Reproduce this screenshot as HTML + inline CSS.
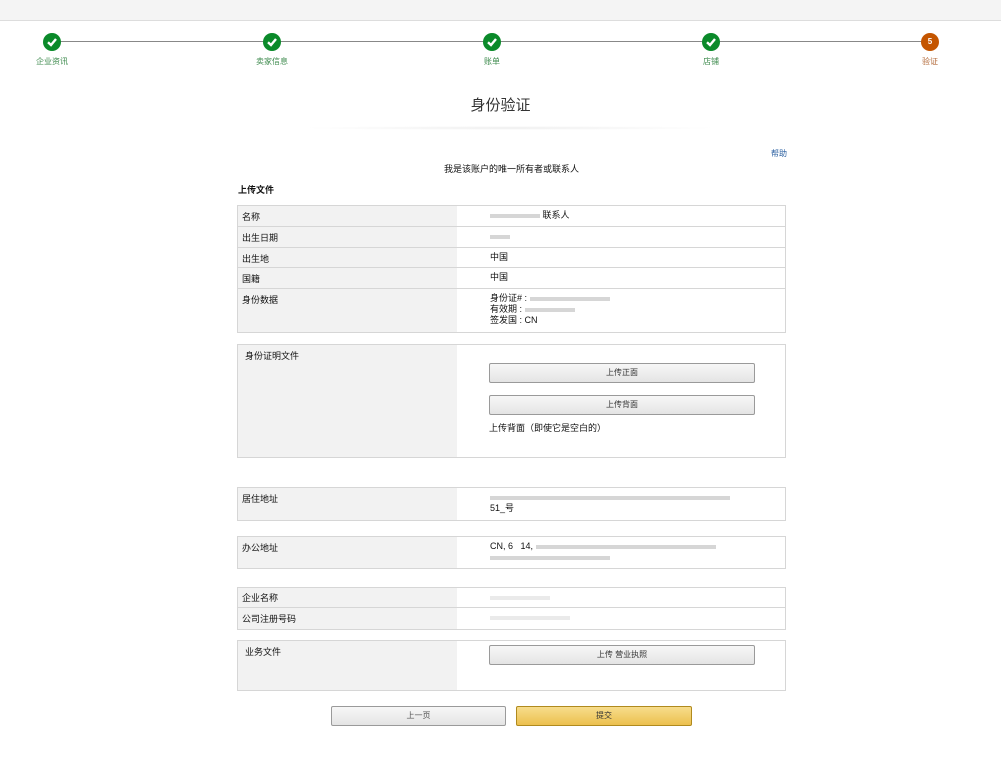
<!DOCTYPE html>
<html><head><meta charset="utf-8"><style>
*{margin:0;padding:0;box-sizing:border-box}
body{width:1001px;height:776px;background:#fff;font-family:"Liberation Sans","Noto Sans CJK SC",sans-serif;font-size:9px;color:#111;position:relative;overflow:hidden}
.a{position:absolute}
.top{left:0;top:0;width:1001px;height:21px;background:#f4f4f4;border-bottom:1px solid #ddd}
.line{left:52px;top:41px;width:878px;height:1px;background:#888}
.c{width:18px;height:18px;border-radius:50%;background:#0b8a2a;top:33px}
.c svg{position:absolute;left:3px;top:3px}
.lab{top:56px;font-size:8px;color:#3c8a4c;width:80px;text-align:center}
.box{border:1px solid #d6d6d6;left:237px;width:549px;background:linear-gradient(to right,#f2f2f2 219px,#fff 219px)}
.row{position:relative;border-bottom:1px solid #d6d6d6}
.row:last-child{border-bottom:none}
.l{position:absolute;left:4px;top:4px}
.r{position:absolute;left:252px;top:4px;line-height:11px}
.btn{position:absolute;border:1px solid #9a9a9a;border-radius:2px;background:linear-gradient(#f7f7f7,#e4e4e4);text-align:center;font-size:8px;color:#333}
.blur{display:inline-block;height:4px;background:#bbb;vertical-align:middle;opacity:.6}
</style></head><body>
<div class="a top"></div>
<div class="a line"></div>
<div class="a c" style="left:43px"><svg width="12" height="12" viewBox="0 0 12 12"><path d="M2 6.2 L5 9 L10 3" stroke="#fff" stroke-width="2.4" fill="none"/></svg></div>
<div class="a c" style="left:263px"><svg width="12" height="12" viewBox="0 0 12 12"><path d="M2 6.2 L5 9 L10 3" stroke="#fff" stroke-width="2.4" fill="none"/></svg></div>
<div class="a c" style="left:483px"><svg width="12" height="12" viewBox="0 0 12 12"><path d="M2 6.2 L5 9 L10 3" stroke="#fff" stroke-width="2.4" fill="none"/></svg></div>
<div class="a c" style="left:702px"><svg width="12" height="12" viewBox="0 0 12 12"><path d="M2 6.2 L5 9 L10 3" stroke="#fff" stroke-width="2.4" fill="none"/></svg></div>
<div class="a c" style="left:921px;background:#c45500;color:#fff;font-size:8px;font-weight:bold;text-align:center;line-height:18px">5</div>
<div class="a lab" style="left:12px">企业资讯</div>
<div class="a lab" style="left:232px">卖家信息</div>
<div class="a lab" style="left:452px">账单</div>
<div class="a lab" style="left:671px">店铺</div>
<div class="a lab" style="left:890px;color:#b36a3a">验证</div>

<div class="a" style="left:0;width:1001px;top:94px;text-align:center;font-size:15px;color:#333">身份验证</div>
<div class="a" style="left:300px;width:420px;top:126px;height:4px;background:radial-gradient(ellipse at center,#eee,#fff 70%)"></div>
<div class="a" style="left:771px;top:148px;font-size:8px;color:#2a5fa0">帮助</div>
<div class="a" style="left:0;width:1023px;top:162px;text-align:center">我是该账户的唯一所有者或联系人</div>
<div class="a" style="left:238px;top:183px;font-weight:bold">上传文件</div>

<div class="a box" style="top:205px">
 <div class="row" style="height:21px"><span class="l">名称</span><span class="r"><span class="blur" style="width:50px"></span> 联系人</span></div>
 <div class="row" style="height:21px"><span class="l">出生日期</span><span class="r"><span class="blur" style="width:20px"></span></span></div>
 <div class="row" style="height:20px"><span class="l">出生地</span><span class="r">中国</span></div>
 <div class="row" style="height:21px"><span class="l">国籍</span><span class="r">中国</span></div>
 <div class="row" style="height:43px"><span class="l">身份数据</span><span class="r">身份证# : <span class="blur" style="width:80px"></span><br>有效期 : <span class="blur" style="width:50px"></span><br>签发国 : CN</span></div>
</div>

<div class="a box" style="top:344px;height:114px">
 <span class="l" style="left:7px">身份证明文件</span>
 <div class="btn" style="left:251px;top:18px;width:266px;height:20px;line-height:18px">上传正面</div>
 <div class="btn" style="left:251px;top:50px;width:266px;height:20px;line-height:18px">上传背面</div>
 <span class="a" style="left:251px;top:76px">上传背面（即使它是空白的）</span>
</div>

<div class="a box" style="top:487px;height:34px"><span class="l">居住地址</span><span class="r"><span class="blur" style="width:240px"></span><br>51_号</span></div>
<div class="a box" style="top:536px;height:33px"><span class="l">办公地址</span><span class="r">CN, 6 &nbsp; 14, <span class="blur" style="width:180px"></span><br><span class="blur" style="width:120px"></span></span></div>
<div class="a box" style="top:587px">
 <div class="row" style="height:20px"><span class="l" style="top:3px">企业名称</span><span class="r"><span class="blur" style="width:60px;opacity:.3"></span></span></div>
 <div class="row" style="height:21px"><span class="l" style="top:4px">公司注册号码</span><span class="r"><span class="blur" style="width:80px;opacity:.3"></span></span></div>
</div>
<div class="a box" style="top:640px;height:51px">
 <span class="l" style="left:7px">业务文件</span>
 <div class="btn" style="left:251px;top:4px;width:266px;height:20px;line-height:18px">上传 营业执照</div>
</div>

<div class="btn" style="left:331px;top:706px;width:175px;height:20px;line-height:18px;color:#555">上一页</div>
<div class="btn" style="left:516px;top:706px;width:176px;height:20px;line-height:18px;border-color:#b08a1e;background:linear-gradient(#f7dd8c,#ecc04e)">提交</div>
</body></html>
